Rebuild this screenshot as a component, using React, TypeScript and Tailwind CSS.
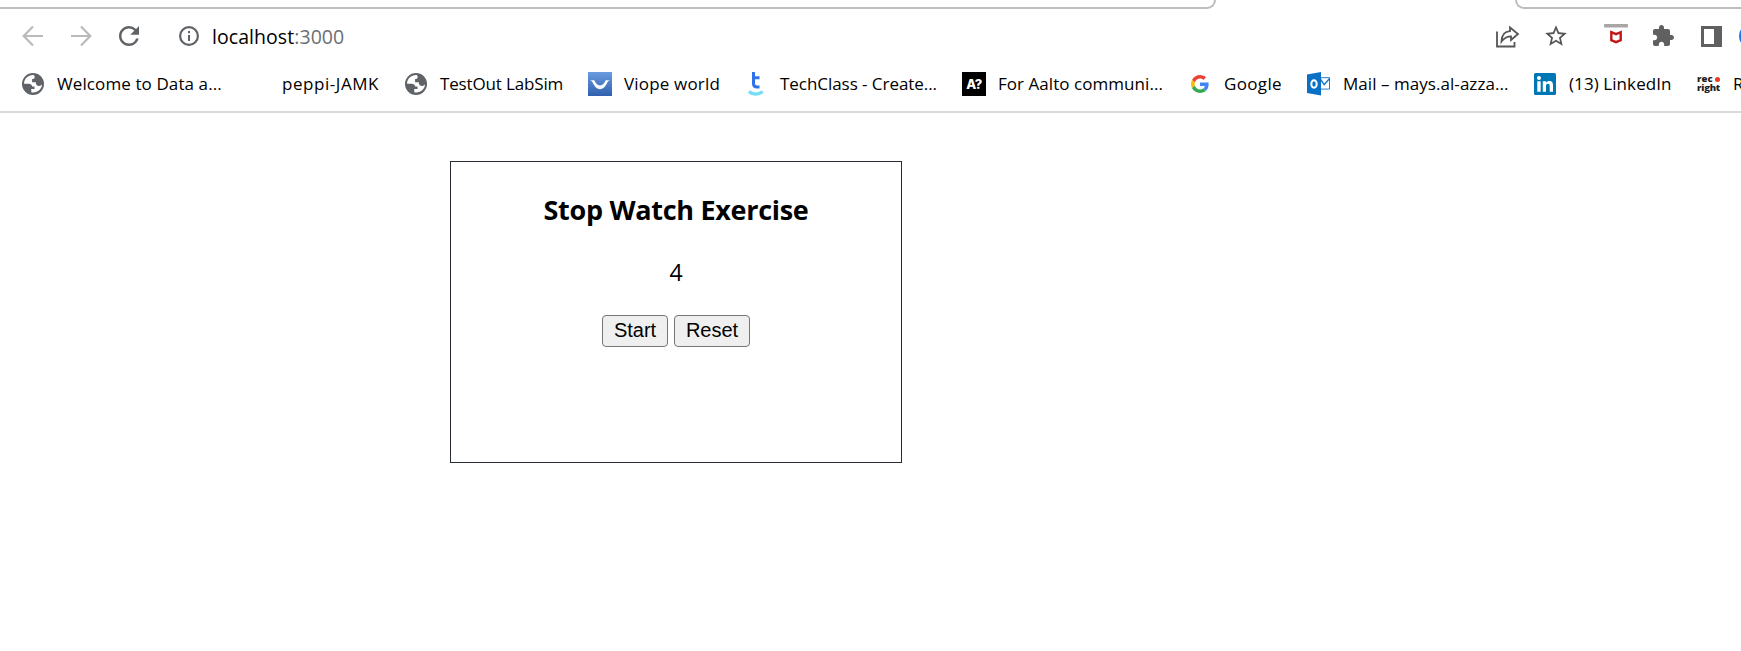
import type { ReactNode } from "react";

const Globe = () => (
  <svg width="22" height="22" viewBox="0 0 24 24">
    <circle cx="12" cy="12" r="12" fill="#5f6368" />
    <path d="M12.6 2.3C7 2 2.3 6.400 2.200 11.800h5.200c2 0 3.300 1 3.700 2.800h2.600v2.900h-3.600v3.600c6.300 1.300 11.600-3.200 11.700-8.700-.8 1.100-1.700 1.700-3 1.700-2.600 0-3.800-1.700-3.800-4.100h-4V6.500c1.900 0 2.800-.6 2.800-2.200 0-.8-.4-1.500-1.200-2z" fill="#fff" />
  </svg>
);

const Viope = () => (
  <svg width="24" height="24" viewBox="0 0 24 24">
    <defs>
      <linearGradient id="viope" x1="0" y1="0" x2="0" y2="1">
        <stop offset="0" stopColor="#6a9bdf" />
        <stop offset="1" stopColor="#3160ae" />
      </linearGradient>
    </defs>
    <rect width="24" height="24" fill="url(#viope)" />
    <path d="M2 8.300h4.300c1.200 2.600 3.100 5.300 5.700 5.300s4.500-2.700 5.700-5.300H22c-2 .5-2.200 1.500-3.300 3.500-1.700 3.300-3.900 5.400-6.700 5.400s-5-2.100-6.700-5.400C4.200 9.800 4 8.800 2 8.300z" fill="#fff" />
  </svg>
);

const TechClass = () => (
  <svg width="24" height="24" viewBox="0 0 24 24" fill="none">
    <path d="M9.500 0v11.500q0 3.600 3.500 3.600h2.500M9.500 5.800h6" stroke="#2f73e8" strokeWidth="3" />
    <path d="M4.800 19.600q6.700 5 14 0" stroke="#74def6" strokeWidth="3.200" />
  </svg>
);

const Aalto = () => (
  <span className="flex h-6 w-6 items-center justify-center bg-black font-['Inter'] text-[13px] leading-none font-extrabold tracking-[-0.5px] text-white">
    A?
  </span>
);

const Google = () => (
  <svg width="18" height="18" viewBox="0 0 48 48">
    <path fill="#EA4335" d="M24 9.500c3.540 0 6.710 1.220 9.210 3.600l6.850-6.850C35.900 2.380 30.470 0 24 0 14.620 0 6.510 5.380 2.560 13.220l7.980 6.190C12.430 13.720 17.740 9.500 24 9.500z" />
    <path fill="#4285F4" d="M46.980 24.550c0-1.570-.15-3.090-.38-4.550H24v9.020h12.940c-.58 2.960-2.260 5.480-4.780 7.180l7.730 6c4.510-4.180 7.090-10.360 7.090-17.650z" />
    <path fill="#FBBC05" d="M10.530 28.590c-.48-1.450-.76-2.990-.76-4.590s.27-3.140.76-4.590l-7.980-6.190C.92 16.460 0 20.120 0 24c0 3.880.92 7.540 2.560 10.780l7.970-6.190z" />
    <path fill="#34A853" d="M24 48c6.480 0 11.930-2.130 15.890-5.810l-7.730-6c-2.150 1.450-4.920 2.300-8.160 2.300-6.260 0-11.570-4.220-13.470-9.910l-7.980 6.190C6.510 42.620 14.620 48 24 48z" />
  </svg>
);

const Outlook = () => (
  <svg width="24" height="24" viewBox="0 0 24 24">
    <path d="M13 5.700h9.500v11.400H13z" fill="#fff" stroke="#2c7cc9" />
    <path d="M13 6.500l4.200 6.200 5.600-6.500" fill="none" stroke="#1673c5" strokeWidth="1.400" />
    <path d="M0 2.600L14 0v23.500L0 21z" fill="#0a70c6" />
    <ellipse cx="7" cy="12" rx="2.700" ry="3.700" fill="none" stroke="#fff" strokeWidth="2" />
  </svg>
);

const LinkedIn = () => (
  <svg width="22" height="22" viewBox="0 0 22 22">
    <rect width="22" height="22" rx="1.500" fill="#0077b5" />
    <circle cx="5" cy="5" r="2" fill="#fff" />
    <path d="M3.300 8.300h3.400v10.500H3.300zM8.800 8.300H12v1.500c.7-1.200 1.900-1.800 3.300-1.800 3 0 3.700 2 3.700 4.800v6h-3.300v-5.400c0-1.400-.2-2.600-1.800-2.600s-1.900 1.200-1.900 2.600v5.400H8.800z" fill="#fff" />
  </svg>
);

const RecRight = () => (
  <span className="flex h-5 w-6 flex-col font-['Open_Sans'] text-[9.500px] leading-[9px] font-extrabold text-[#222]">
    <span className="flex items-center gap-[2px] tracking-[0.1px]">
      rec
      <span className="mt-px h-[5px] w-[5px] rounded-full bg-[#f03a20]" />
    </span>
    <span className="tracking-[-0.2px]">right</span>
  </span>
);

type Bookmark = { label: string; width: string; text: string; icon: ReactNode };

const bookmarks: Bookmark[] = [
  { label: "Welcome to Data a...", width: "w-[225px]", text: "tracking-[0.1px]", icon: <Globe /> },
  { label: "peppi-JAMK", width: "w-[158px]", text: "tracking-[0.55px]", icon: null },
  { label: "TestOut LabSim", width: "w-[184px]", text: "tracking-[-0.15px]", icon: <Globe /> },
  { label: "Viope world", width: "w-[156px]", text: "tracking-[0.18px]", icon: <Viope /> },
  { label: "TechClass - Create...", width: "w-[218px]", text: "tracking-[-0.05px]", icon: <TechClass /> },
  { label: "For Aalto communi...", width: "w-[226px]", text: "tracking-[0.05px]", icon: <Aalto /> },
  { label: "Google", width: "w-[119px]", text: "tracking-[0.35px]", icon: <Google /> },
  { label: "Mail – mays.al-azza...", width: "w-[226px]", text: "tracking-[0.05px]", icon: <Outlook /> },
  { label: "(13) LinkedIn", width: "w-[164px]", text: "tracking-[0.08px]", icon: <LinkedIn /> },
  { label: "R", width: "w-[60px]", text: "tracking-[0px]", icon: <RecRight /> },
];

export default function App() {
  return (
    <div className="h-[651px] w-full overflow-hidden bg-white font-['Open_Sans',sans-serif] text-black">
      <div className="flex h-[9px] justify-between">
        <div className="h-[9px] w-[1216px] rounded-br-[11px] border-r-2 border-b-2 border-[#bdbdbd]" />
        <div className="h-[9px] w-[226px] rounded-bl-[11px] border-b-2 border-l-2 border-[#bdbdbd]" />
      </div>

      <div className="flex h-[54px] w-[1800px] items-center pl-[18px]">
        <svg width="30" height="30" viewBox="0 0 30 30" fill="none" stroke="#bababa" strokeWidth="2.200">
          <path d="M25 15H6.500M15 5.500L5.700 15l9.300 9.500" />
        </svg>
        <svg className="ml-[18px]" width="30" height="30" viewBox="0 0 30 30" fill="none" stroke="#bababa" strokeWidth="2.200">
          <path d="M5 15h18.500M15 5.500l9.300 9.500-9.300 9.500" />
        </svg>
        <svg className="ml-[18px]" width="30" height="30" viewBox="0 0 24 24" fill="#5f6368">
          <path d="M17.650 6.350A7.958 7.958 0 0 0 12 4c-4.420 0-7.990 3.580-7.990 8s3.570 8 7.990 8c3.730 0 6.840-2.550 7.730-6h-2.080A5.990 5.990 0 0 1 12 18c-3.310 0-6-2.690-6-6s2.690-6 6-6c1.660 0 3.140.690 4.220 1.780L13 11h7V4l-2.350 2.350z" />
        </svg>
        <svg className="ml-[35px]" width="20" height="20" viewBox="0 0 20 20" fill="#5f6368">
          <circle cx="10" cy="10" r="8.900" fill="none" stroke="#5f6368" strokeWidth="2.200" />
          <path d="M9 9h2v6H9zM9 5h2v2.200H9z" />
        </svg>
        <div className="ml-[13px] w-[1282px] pt-px text-[19.500px] leading-[28px] tracking-[0.06px]">
          localhost<span className="text-[#6b6f74]">:3000</span>
        </div>
        <svg width="26" height="26" viewBox="0 0 26 26" fill="none" stroke="#555" strokeWidth="1.800">
          <path d="M3 8.500V23.500h17.500v-4.500" />
          <path d="M16 4.500l8 6.500-7 6v-3.700c-4 0-7 1.700-9.500 5.200C7.700 12 10.500 8.500 16 8.200z" />
        </svg>
        <svg className="ml-[23px]" width="26" height="26" viewBox="0 0 24 24" fill="#555">
          <path d="M22 9.240l-7.190-.620L12 2 9.190 8.630 2 9.240l5.460 4.730L5.820 21 12 17.270 18.180 21l-1.630-7.030L22 9.240zM12 15.400l-3.760 2.270 1-4.280-3.320-2.880 4.380-.380L12 6.100l1.710 4.040 4.380.380-3.320 2.880 1 4.280L12 15.400z" />
        </svg>
        <svg className="ml-[35px]" width="24" height="24" viewBox="0 0 24 24" fill="none">
          <rect width="24" height="3.500" rx="1" fill="#a9a6a6" />
          <path d="M7.300 8.200l4.700 2 4.700-2v8L12 18.200l-4.700-2z" stroke="#c01818" strokeWidth="2.400" />
        </svg>
        <svg className="ml-[23px]" width="24" height="24" viewBox="0 0 24 24" fill="#606060">
          <path d="M20.500 11H19V7c0-1.100-.9-2-2-2h-4V3.500C13 2.120 11.880 1 10.500 1S8 2.120 8 3.500V5H4c-1.100 0-1.990.9-1.990 2v3.800H3.500c1.490 0 2.700 1.210 2.700 2.700s-1.210 2.700-2.700 2.700H2V20c0 1.100.9 2 2 2h3.800v-1.500c0-1.490 1.210-2.700 2.700-2.700s2.700 1.210 2.700 2.700V22H17c1.100 0 2-.9 2-2v-4h1.500c1.380 0 2.500-1.120 2.500-2.500S21.880 11 20.500 11z" />
        </svg>
        <svg className="ml-[26px]" width="21" height="21" viewBox="0 0 21 21">
          <path d="M0 0h21v21H0zM3 3v15h10V3z" fill="#606060" fillRule="evenodd" />
        </svg>
        <div className="ml-[17px] h-6 w-6 shrink-0 rounded-full border-2 border-[#1a73e8]" />
      </div>

      <div className="flex h-[50px] w-[1800px] border-b-2 border-[#dadada] pl-[21px]">
        {bookmarks.map((b) => (
          <div key={b.label} className={`flex h-[42px] shrink-0 items-center ${b.width}`}>
            <div className="mr-3 flex h-6 w-6 shrink-0 items-center justify-center">{b.icon}</div>
            <span className={`text-[17px] leading-6 whitespace-nowrap ${b.text}`}>{b.label}</span>
          </div>
        ))}
      </div>

      <div className="mt-12 ml-[450px] flex h-[302px] w-[452px] flex-col items-center border border-[#282c34]">
        <h3 className="mt-[30px] text-[27px] leading-9 font-bold tracking-[-0.3px]">Stop Watch Exercise</h3>
        <p className="mt-[28px] text-[23px] leading-8">4</p>
        <div className="mt-[27px] flex gap-1.5 font-['Liberation_Sans',Arial,sans-serif] text-[20px] leading-[22px]">
          <button className="h-8 w-[66px] rounded-[4px] border border-[#767676] bg-[#efefef] pb-0.5">Start</button>
          <button className="h-8 w-[76px] rounded-[4px] border border-[#767676] bg-[#efefef] pb-0.5">Reset</button>
        </div>
      </div>
    </div>
  );
}
